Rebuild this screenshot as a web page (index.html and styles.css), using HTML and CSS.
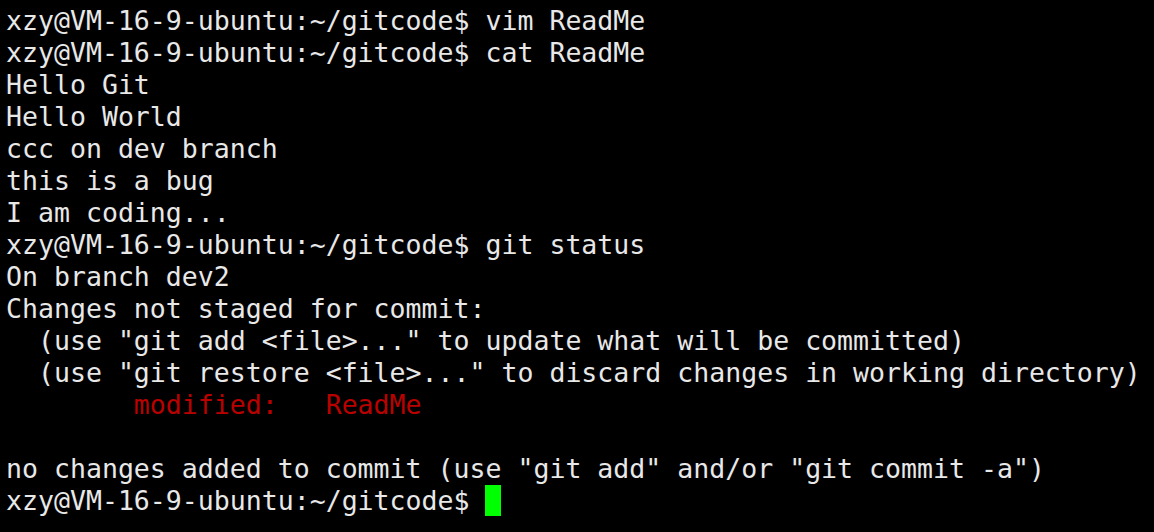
FILE: index.html
```html
<!DOCTYPE html>
<html>
<head>
<meta charset="utf-8">
<link rel="stylesheet" href="styles.css">
</head>
<body>
<pre class="term">xzy@VM-16-9-ubuntu:~/gitcode$ vim ReadMe
xzy@VM-16-9-ubuntu:~/gitcode$ cat ReadMe
Hello Git
Hello World
ccc on dev branch
this is a bug
I am coding...
xzy@VM-16-9-ubuntu:~/gitcode$ git status
On branch dev2
Changes not staged for commit:
  (use "git add &lt;file&gt;..." to update what will be committed)
  (use "git restore &lt;file&gt;..." to discard changes in working directory)
<span class="red">        modified:   ReadMe</span>

no changes added to commit (use "git add" and/or "git commit -a")
xzy@VM-16-9-ubuntu:~/gitcode$ <span class="cursor"> </span></pre>
</body>
</html>
```
FILE: styles.css
```css
html, body {
  margin: 0;
  padding: 0;
  background: #000;
  width: 1154px;
  height: 532px;
  overflow: hidden;
}
.term {
  margin: 0;
  padding: 5px 0 0 6px;
  font-family: "DejaVu Sans Mono", monospace;
  font-size: 26.55px;
  line-height: 32px;
  color: #e8e8e8;
  white-space: pre;
}
.red {
  color: #bb0000;
}
.cursor {
  background: #00ff00;
  display: inline-block;
  width: 16px;
  height: 31px;
  vertical-align: top;
}
```
